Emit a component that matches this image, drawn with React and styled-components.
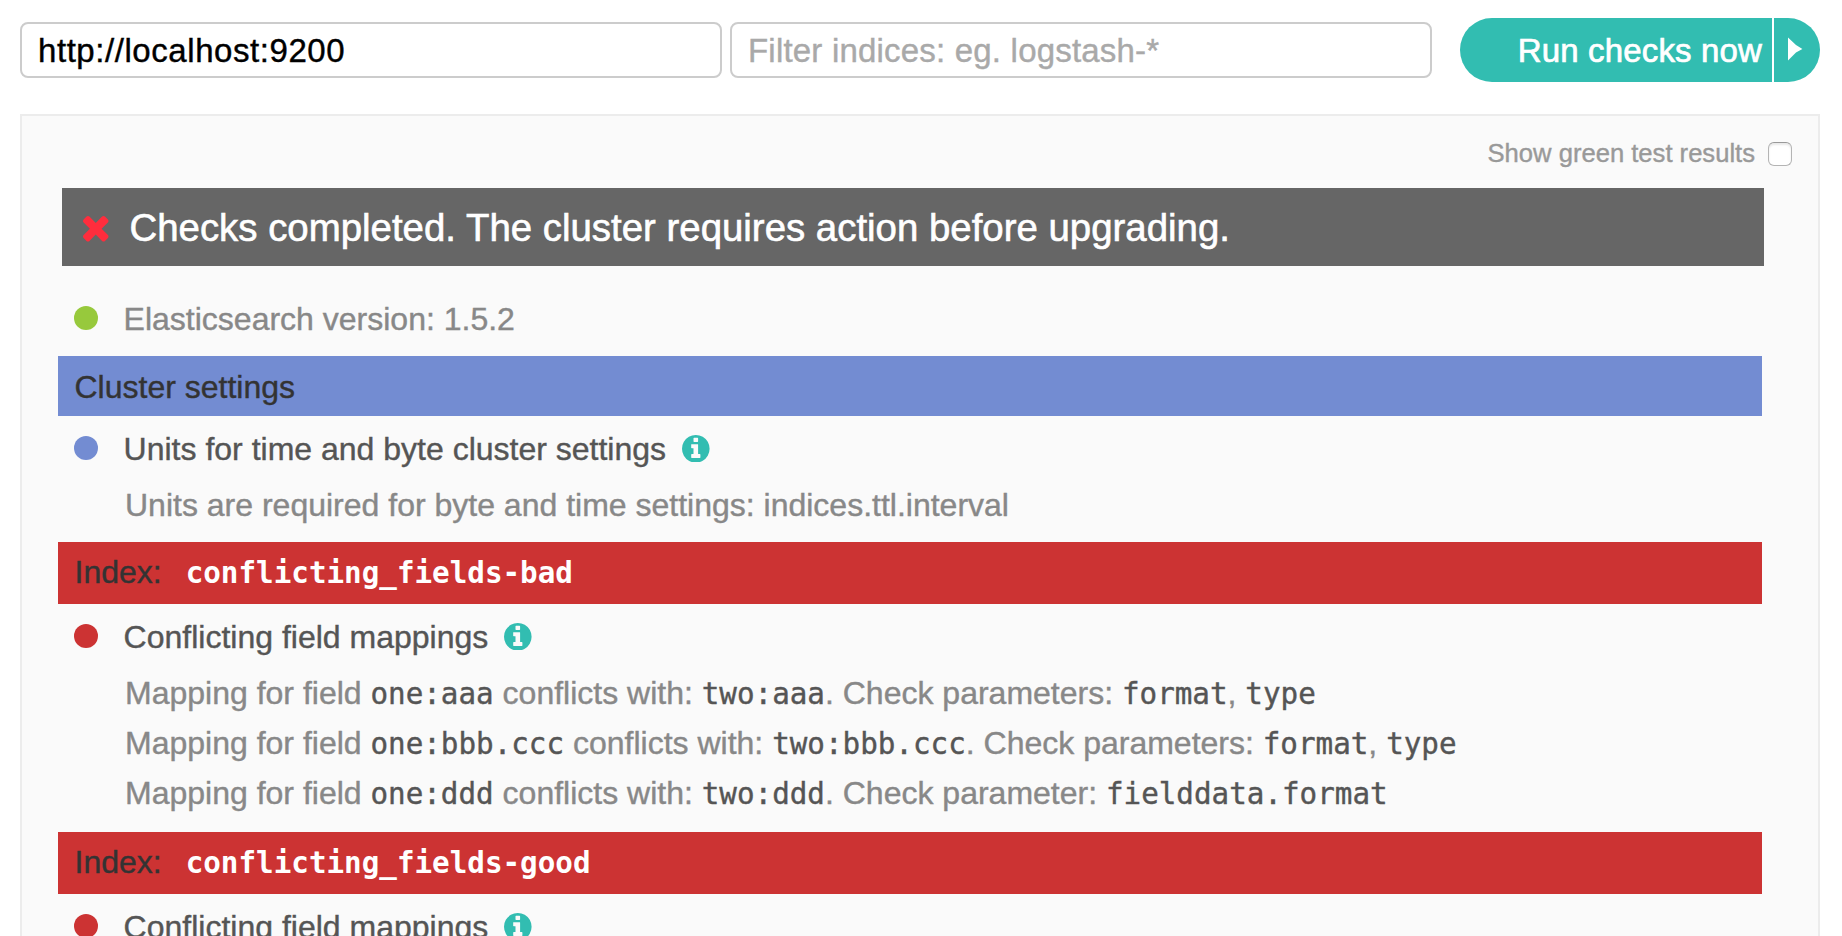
import React from 'react';
import styled, { createGlobalStyle } from 'styled-components';

const colors = {
  green: '#97c93c',
  blue: '#738cd2',
  red: '#cc3333',
  teal: '#32bdb1',
};

const GlobalStyle = createGlobalStyle`
  *, *::before, *::after { box-sizing: border-box; }
  body {
    margin: 0;
    background: #fff;
    font-family: "Liberation Sans", Arial, Helvetica, sans-serif;
    font-size: 32px;
    color: #555;
    -webkit-text-stroke: 0.4px currentColor;
  }
`;

const Page = styled.div`
  display: flex;
  flex-direction: column;
  height: 936px;
  overflow: hidden;
  padding: 18px 22px 0 20px;
`;

const Toolbar = styled.form`
  display: flex;
  align-items: center;
  flex: none;
  height: 64px;
`;

const Field = styled.input`
  width: 702px;
  height: 56px;
  margin: 0 8px 0 0;
  padding: 2px 16px 0;
  border: 2px solid #ccc;
  border-radius: 8px;
  background: #fff;
  color: #000;
  font: inherit;
  font-size: 33px;
  letter-spacing: ${(p) => p.$tracking};
  outline: none;

  &::placeholder {
    color: #a9a9a9;
    opacity: 1;
  }
`;

const RunButton = styled.button`
  display: flex;
  width: 360px;
  height: 64px;
  margin: 0 0 0 20px;
  padding: 0;
  border: 0;
  border-radius: 32px;
  overflow: hidden;
  background: ${colors.teal};
  color: #fff;
  font: inherit;
  font-size: 33px;
  letter-spacing: 0.15px;
`;

const RunLabel = styled.span`
  flex: 1;
  padding-right: 10px;
  line-height: 66px;
  text-align: right;
  white-space: nowrap;
  -webkit-text-stroke: 0.7px currentColor;
`;

const RunArrow = styled.span`
  width: 48px;
  border-left: 2px solid #fff;
  padding: 19px 0 0 13px;
  text-align: left;

  svg { display: block; }
`;

const Panel = styled.main`
  flex: none;
  height: 1000px;
  margin-top: 32px;
  border: 2px solid #ececec;
  background: #fafafa;
  padding-top: 12px;
`;

const ToggleRow = styled.label`
  display: flex;
  justify-content: flex-end;
  align-items: center;
  gap: 13px;
  height: 50px;
  margin-bottom: 10px;
  padding-right: 26px;
  color: #999;
  font-size: 25.6px;
`;

const Checkbox = styled.input`
  appearance: none;
  width: 24px;
  height: 24px;
  margin: 2px 0 0;
  border: 1px solid #b4b4b4;
  border-top-color: #999;
  border-radius: 6px;
  background: #fff;
  box-shadow: inset 0 2px 2px #e9e9e9;
`;

const Summary = styled.h1`
  display: flex;
  align-items: center;
  height: 78px;
  margin: 0 54px 28px 40px;
  padding: 1px 0 0 21px;
  background: #666;
  color: #fff;
  font-size: 38.4px;
  font-weight: 400;
  white-space: nowrap;
  -webkit-text-stroke: 0.6px currentColor;

  svg { margin: 3px 21px 0 0; }
`;

const Results = styled.div`
  margin: 0 56px 0 36px;
`;

const SectionBar = styled.h2`
  display: flex;
  height: ${(p) => (p.$code ? '62px' : '60px')};
  margin: 12px 0 8px;
  padding: ${(p) => (p.$code ? '0' : '2px')} 0 0 16.5px;
  background: ${(p) => p.$color};
  color: #333;
  font-size: 32px;
  font-weight: 400;
  line-height: ${(p) => (p.$code ? '60px' : '58px')};
`;

const IndexName = styled.code`
  margin-left: 24px;
  color: #fff;
  font-family: "DejaVu Sans Mono", monospace;
  font-size: 29.24px;
  font-weight: 700;
  line-height: 63px;
  -webkit-text-stroke: 0;
`;

const CheckTitle = styled.div`
  display: flex;
  align-items: center;
  height: 50px;
  padding-left: 16px;
  line-height: 50px;
  color: ${(p) => (p.$muted ? '#888' : '#555')};
`;

const Dot = styled.span`
  width: 24px;
  height: 24px;
  margin: 0 25.6px 2px 0;
  border-radius: 50%;
  background: ${(p) => p.$color};
`;

const InfoSvg = styled.svg`
  width: 27.6px;
  height: 27.6px;
  margin: 0 0 1px 16px;
  fill: ${colors.teal};
`;

const Details = styled.ul`
  margin: 6px 0 0;
  padding: 0 0 ${(p) => (p.$code ? '2px' : '0')} 67px;
  list-style: none;
  color: #888;
`;

const Detail = styled.li`
  height: 50px;
  line-height: 50px;
  white-space: nowrap;
`;

const Code = styled.code`
  color: #555;
  font-family: "DejaVu Sans Mono", monospace;
  font-size: 29.24px;
  line-height: 0;
`;

const InfoIcon = () => (
  <InfoSvg viewBox="128 128 1536 1536" aria-hidden="true">
    <path d="M1152 1376v-160q0-14-9-23t-23-9h-96v-512q0-14-9-23t-23-9h-320q-14 0-23 9t-9 23v160q0 14 9 23t23 9h96v320h-96q-14 0-23 9t-9 23v160q0 14 9 23t23 9h448q14 0 23-9t9-23zm-128-896v-160q0-14-9-23t-23-9h-192q-14 0-23 9t-9 23v160q0 14 9 23t23 9h192q14 0 23-9t9-23zm640 416q0 209-103 385.5t-279.5 279.5-385.5 103-385.5-103-279.5-279.5-103-385.5 103-385.5 279.5-279.5 385.5-103 385.5 103 279.5 279.5 103 385.5z" />
  </InfoSvg>
);

const CrossIcon = () => (
  <svg width="25.5" height="25.5" viewBox="302 366 1188 1188" fill="#ff2d3d" aria-hidden="true">
    <path d="M1490 1322q0 40-28 68l-136 136q-28 28-68 28t-68-28l-294-294-294 294q-28 28-68 28t-68-28l-136-136q-28-28-28-68t28-68l294-294-294-294q-28-28-28-68t28-68l136-136q28-28 68-28t68 28l294 294 294-294q28-28 68-28t68 28l136 136q28 28 28 68t-28 68l-294 294 294 294q28 28 28 68z" />
  </svg>
);

const ArrowIcon = () => (
  <svg width="16" height="24" viewBox="0 0 16 24" fill="#fff" aria-hidden="true">
    <path d="M1 0.5L9 8L15.4 12L9 15.6L1 23.5Z" />
  </svg>
);

const conflicts = [
  { a: 'one:aaa', b: 'two:aaa', params: ['format', 'type'] },
  { a: 'one:bbb.ccc', b: 'two:bbb.ccc', params: ['format', 'type'] },
  { a: 'one:ddd', b: 'two:ddd', params: ['fielddata.format'] },
];

const Conflict = ({ a, b, params }) => (
  <Detail>
    Mapping for field <Code>{a}</Code> conflicts with: <Code>{b}</Code>
    {params.length > 1 ? '. Check parameters: ' : '. Check parameter: '}
    {params.map((name, i) => (
      <React.Fragment key={name}>
        {i > 0 && ', '}
        <Code>{name}</Code>
      </React.Fragment>
    ))}
  </Detail>
);

export default function App() {
  return (
    <>
      <GlobalStyle />
      <Page>
        <Toolbar>
          <Field $tracking="0.56px" defaultValue="http://localhost:9200" />
          <Field $tracking="0.2px" placeholder="Filter indices: eg. logstash-*" />
          <RunButton type="button">
            <RunLabel>Run checks now</RunLabel>
            <RunArrow><ArrowIcon /></RunArrow>
          </RunButton>
        </Toolbar>
        <Panel>
          <ToggleRow>
            Show green test results
            <Checkbox type="checkbox" />
          </ToggleRow>
          <Summary>
            <CrossIcon />
            Checks completed. The cluster requires action before upgrading.
          </Summary>
          <Results>
            <CheckTitle $muted><Dot $color={colors.green} />Elasticsearch version: 1.5.2</CheckTitle>

            <SectionBar $color={colors.blue}>Cluster settings</SectionBar>
            <CheckTitle>
              <Dot $color={colors.blue} />Units for time and byte cluster settings<InfoIcon />
            </CheckTitle>
            <Details>
              <Detail>Units are required for byte and time settings: indices.ttl.interval</Detail>
            </Details>

            <SectionBar $code $color={colors.red}>
              Index:<IndexName>conflicting_fields-bad</IndexName>
            </SectionBar>
            <CheckTitle>
              <Dot $color={colors.red} />Conflicting field mappings<InfoIcon />
            </CheckTitle>
            <Details $code>
              {conflicts.map((c) => <Conflict key={c.a} {...c} />)}
            </Details>

            <SectionBar $code $color={colors.red}>
              Index:<IndexName>conflicting_fields-good</IndexName>
            </SectionBar>
            <CheckTitle>
              <Dot $color={colors.red} />Conflicting field mappings<InfoIcon />
            </CheckTitle>
          </Results>
        </Panel>
      </Page>
    </>
  );
}
